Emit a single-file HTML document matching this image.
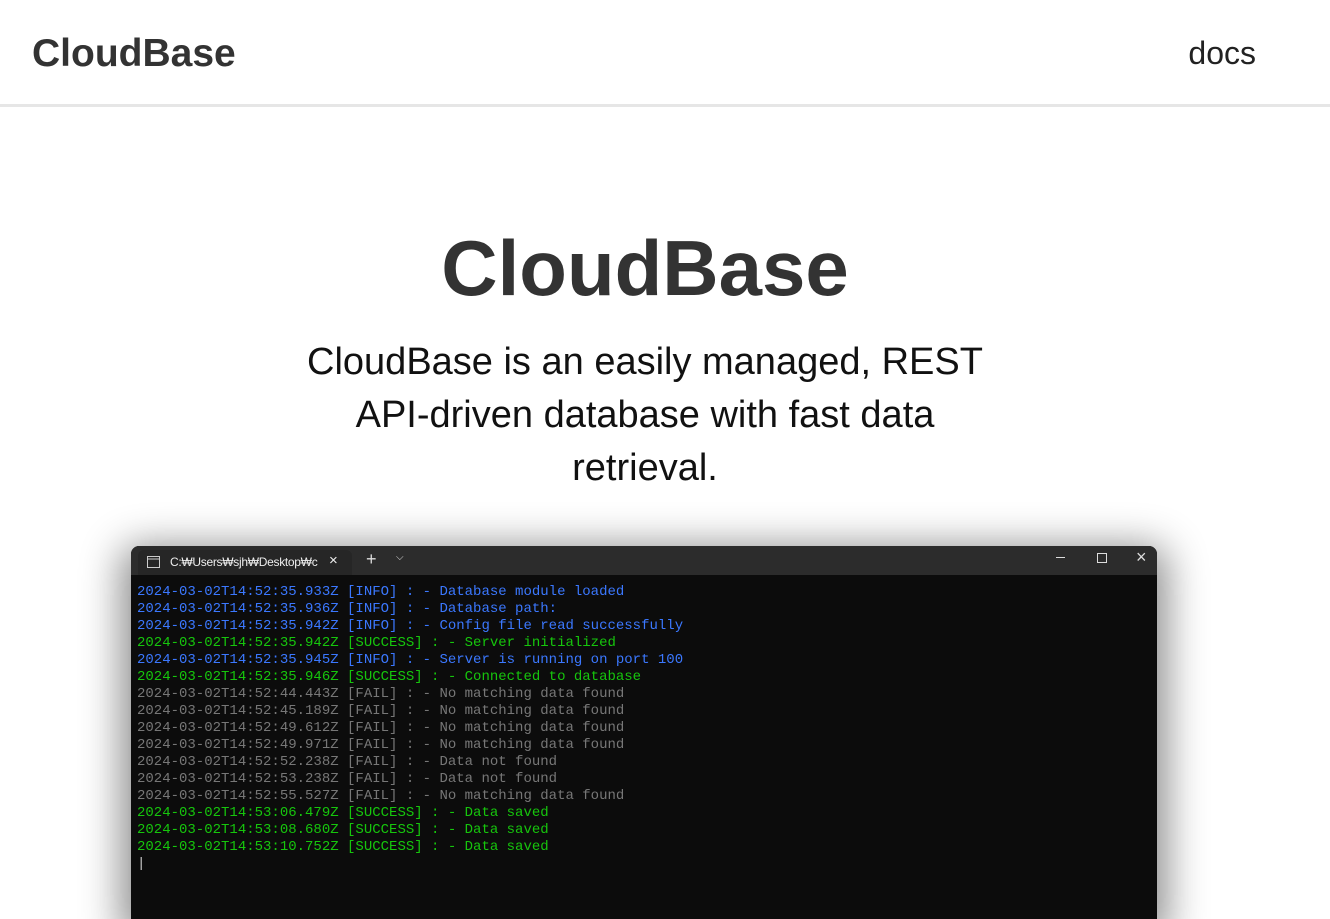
<!DOCTYPE html>
<html><head><style>
body{margin:0;width:1330px;height:919px;overflow:hidden;background:#fff;font-family:"Liberation Sans","Noto Sans CJK KR",sans-serif;color:#333;position:relative}
.hdr{height:104px;border-bottom:3px solid #e6e6e6;position:relative}
.logo{position:absolute;left:32px;top:32px;font-size:39px;font-weight:bold;color:#333}
.docs{position:absolute;right:74px;top:35px;font-size:32px;color:#222}
h1{position:absolute;top:223px;left:0;width:1290px;padding-left:0;text-align:center;margin:0;font-size:78px;font-weight:bold;color:#333}
.sub{position:absolute;top:336px;left:290px;width:710px;text-align:center;font-size:38px;line-height:53px;color:#111}
.term{position:absolute;left:131px;top:546px;width:1026px;height:373px;background:#0c0c0c;border-radius:8px 8px 0 0;box-shadow:0 10px 40px 10px rgba(0,0,0,.45);overflow:hidden}
.bar{height:29px;background:#2c2c2c;position:relative;color:#ddd}
.tab{position:absolute;left:7px;top:4px;width:214px;height:25px;background:#262626;border-radius:6px 6px 0 0;font-size:12px}
.tab span{position:absolute;left:32px;top:5px;color:#eee;letter-spacing:-.3px}
pre{margin:0;padding:9px 6px;font-family:"Liberation Mono",monospace;font-size:14px;line-height:17px;color:#777}
.i{color:#3b78ff}.s{color:#16c60c}
</style></head><body>
<div class="hdr"><div class="logo">CloudBase</div><div class="docs">docs</div></div>
<h1>CloudBase</h1>
<div class="sub">CloudBase is an easily managed, REST API-driven database with fast data retrieval.</div>
<div class="term">
<div class="bar">
<div class="tab"><svg style="position:absolute;left:9px;top:6px" width="13" height="12"><rect x="0.5" y="0.5" width="12" height="11" fill="none" stroke="#ccc"/><line x1="0" y1="3" x2="13" y2="3" stroke="#ccc"/></svg><span>C:₩Users₩sjh₩Desktop₩c</span><span style="left:191px;top:2px;font-size:15px">×</span></div>
<span style="position:absolute;left:235px;top:3px;font-size:18px">+</span>
<span style="position:absolute;left:265px;top:6px;font-size:10px">⌵</span>
<div style="position:absolute;left:925px;top:11px;width:9px;height:1px;background:#ddd"></div>
<div style="position:absolute;left:966px;top:7px;width:8px;height:8px;border:1px solid #ddd"></div>
<span style="position:absolute;left:1005px;top:1px;font-size:18px">×</span>
</div>
<pre><span class="i">2024-03-02T14:52:35.933Z [INFO] : - Database module loaded
2024-03-02T14:52:35.936Z [INFO] : - Database path:
2024-03-02T14:52:35.942Z [INFO] : - Config file read successfully</span>
<span class="s">2024-03-02T14:52:35.942Z [SUCCESS] : - Server initialized</span>
<span class="i">2024-03-02T14:52:35.945Z [INFO] : - Server is running on port 100</span>
<span class="s">2024-03-02T14:52:35.946Z [SUCCESS] : - Connected to database</span>
2024-03-02T14:52:44.443Z [FAIL] : - No matching data found
2024-03-02T14:52:45.189Z [FAIL] : - No matching data found
2024-03-02T14:52:49.612Z [FAIL] : - No matching data found
2024-03-02T14:52:49.971Z [FAIL] : - No matching data found
2024-03-02T14:52:52.238Z [FAIL] : - Data not found
2024-03-02T14:52:53.238Z [FAIL] : - Data not found
2024-03-02T14:52:55.527Z [FAIL] : - No matching data found
<span class="s">2024-03-02T14:53:06.479Z [SUCCESS] : - Data saved
2024-03-02T14:53:08.680Z [SUCCESS] : - Data saved
2024-03-02T14:53:10.752Z [SUCCESS] : - Data saved</span>
<span style="color:#ccc">|</span></pre>
</div>
</body></html>
